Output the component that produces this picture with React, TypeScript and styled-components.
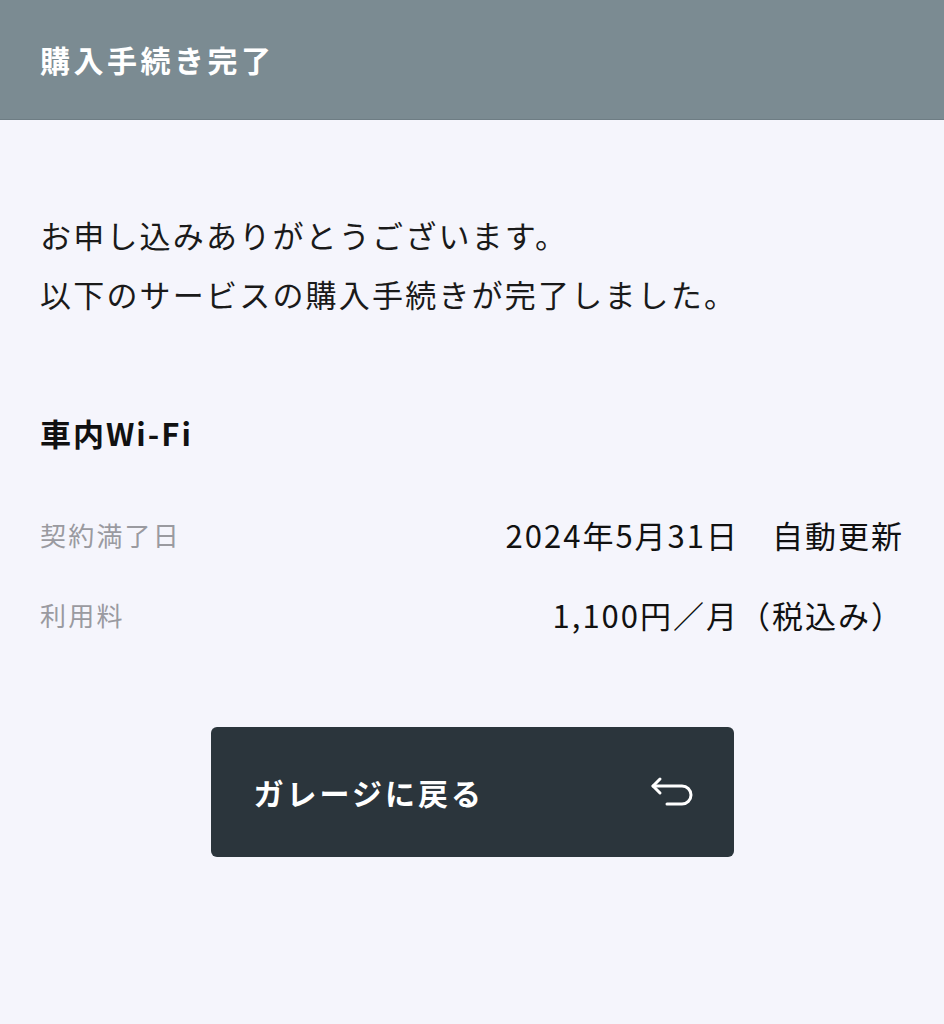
import styled, { createGlobalStyle } from "styled-components";

const GlobalStyle = createGlobalStyle`
  html, body {
    margin: 0;
    padding: 0;
    background: #f5f5fc;
  }
  body {
    font-family: "Noto Sans CJK JP", "Noto Sans", sans-serif;
    color: #111;
  }
`;

const Page = styled.div`
  width: 944px;
  min-height: 1024px;
  background: #f5f5fc;
`;

const Header = styled.header`
  box-sizing: border-box;
  height: 120px;
  background: #7b8b92;
  border-bottom: 1px solid #6e7d84;
  display: flex;
  align-items: center;
  padding: 0 40px 2px;

  h1 {
    margin: 0;
    color: #fff;
    font-size: 30px;
    font-weight: 700;
    letter-spacing: 3.5px;
  }
`;

const Content = styled.main`
  box-sizing: border-box;
  padding: 85px 40px 0 40px;
  display: flex;
  flex-direction: column;
`;

const Message = styled.p`
  margin: 0;
  font-size: 31px;
  line-height: 59px;
  letter-spacing: 2.2px;
  color: #1a1a1a;
`;

const ServiceName = styled.h2`
  margin: 88px 0 39px;
  font-size: 31px;
  line-height: 44px;
  font-weight: 700;
  letter-spacing: 2px;
`;

const Row = styled.div`
  height: 80px;
  display: flex;
  align-items: center;
  justify-content: space-between;
`;

const Label = styled.span`
  font-size: 26px;
  color: #9a9aa0;
  letter-spacing: 2.2px;
`;

const Value = styled.span`
  font-size: 31px;
  color: #111;
  white-space: pre;
  letter-spacing: 2px;
`;

const Button = styled.button`
  box-sizing: border-box;
  align-self: center;
  margin-top: 73px;
  width: 523px;
  height: 130px;
  border: none;
  border-radius: 6px;
  background: #2b353c;
  color: #fff;
  display: flex;
  align-items: center;
  justify-content: space-between;
  padding: 0 40px 0 43px;
  font-family: "Noto Sans CJK JP", "Noto Sans", sans-serif;
  font-size: 30px;
  font-weight: 700;
  letter-spacing: 3px;
  cursor: pointer;
`;

const UndoIcon = () => (
  <svg width="44" height="34" viewBox="0 0 44 34" fill="none" stroke="#fff" strokeWidth="3" strokeLinecap="round" strokeLinejoin="round">
    <path d="M10 4 3 11l7 7" />
    <path d="M3 11h29a9 9 0 0 1 0 18H17" />
  </svg>
);

export default function App() {
  return (
    <Page>
      <GlobalStyle />
      <Header>
        <h1>購入手続き完了</h1>
      </Header>
      <Content>
        <Message>お申し込みありがとうございます。</Message>
        <Message>以下のサービスの購入手続きが完了しました。</Message>
        <ServiceName>車内Wi-Fi</ServiceName>
        <Row>
          <Label>契約満了日</Label>
          <Value>2024年5月31日　自動更新</Value>
        </Row>
        <Row>
          <Label>利用料</Label>
          <Value>1,100円／月（税込み）</Value>
        </Row>
        <Button>
          <span>ガレージに戻る</span>
          <UndoIcon />
        </Button>
      </Content>
    </Page>
  );
}
